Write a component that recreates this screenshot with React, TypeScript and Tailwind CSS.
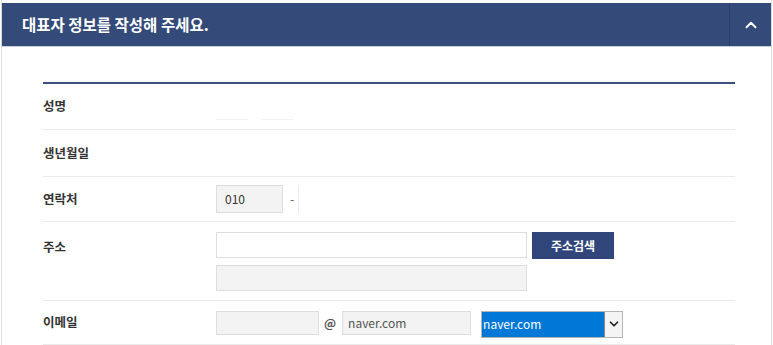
import { ChevronUp, ChevronDown } from 'lucide-react';

const font = { fontFamily: '"Noto Sans CJK KR", "Noto Sans", sans-serif' };

function Label({ children }: { children: React.ReactNode }) {
  return <div className="w-[173px] shrink-0 text-[12.5px] font-bold text-[#333]">{children}</div>;
}

export default function App() {
  return (
    <div className="h-[345px] w-[773px] overflow-hidden bg-white" style={font}>
      <div className="mx-[1px] h-full border-x border-[#dcdcdc] pt-[3px]">
        {/* Header */}
        <div className="flex h-[43px] items-center bg-[#344a79] shadow-[0_1px_0_#c9d0de]">
          <h1 className="flex-1 pl-[20px] text-[15.5px] font-bold text-white">대표자 정보를 작성해 주세요.</h1>
          <div className="flex h-full w-[42px] items-center justify-center border-l border-[#2c3f69]">
            <ChevronUp className="h-[18px] w-[18px] text-white" strokeWidth={2.5} />
          </div>
        </div>

        {/* Form */}
        <div className="pl-[41px] pr-[36px] pt-[36px]">
          <div className="border-t-2 border-[#3d4f80]">
            <div className="flex h-[46px] items-center border-b border-[#ebebeb]">
              <Label>성명</Label>
              <div className="flex gap-[13px] pt-[10px]">
                <div className="h-[16px] w-[32px] border-b border-[#f3f3f3]" />
                <div className="h-[16px] w-[32px] border-b border-[#f3f3f3]" />
              </div>
            </div>
            <div className="flex h-[47px] items-center border-b border-[#ebebeb]">
              <Label>생년월일</Label>
            </div>
            <div className="flex h-[45px] items-center border-b border-[#ebebeb]">
              <Label>연락처</Label>
              <div className="flex h-[28px] w-[67px] items-center border border-[#dedede] bg-[#f3f3f3] pl-[8px] text-[12px] text-[#333]">010</div>
              <span className="ml-[7px] text-[12px] text-[#555]">-</span>
              <div className="ml-[4px] h-[28px] border-l border-[#ececec]" />
            </div>
            <div className="flex h-[79px] items-start border-b border-[#ebebeb] pt-[10px]">
              <div className="w-[173px] shrink-0 pt-[6px] text-[12.5px] font-bold text-[#333]">주소</div>
              <div className="flex flex-col gap-[6px]">
                <div className="flex gap-[5px]">
                  <div className="h-[26px] w-[311px] border border-[#dedede] bg-white" />
                  <button className="h-[27px] w-[82px] bg-[#30467a] text-[12px] font-bold text-white">주소검색</button>
                </div>
                <div className="h-[26px] w-[311px] border border-[#dedede] bg-[#f3f3f3]" />
              </div>
            </div>
            <div className="flex h-[44px] items-center border-b border-[#ebebeb]">
              <Label>이메일</Label>
              <div className="h-[24px] w-[103px] border border-[#dedede] bg-[#f3f3f3]" />
              <span className="ml-[5px] text-[12px] font-bold text-[#555]">@</span>
              <div className="ml-[6px] flex h-[24px] w-[129px] items-center border border-[#dedede] bg-[#f3f3f3] pl-[5px] text-[12px] text-[#555]">naver.com</div>
              <div className="ml-[10px] mt-[3px] flex h-[27px] w-[142px] border border-[#b5b5b5] bg-white">
                <div className="flex flex-1 items-center bg-[#0078d7] pl-[1px] text-[12px] text-white">naver.com</div>
                <div className="flex w-[18px] items-center justify-center border-l border-[#888] bg-[#f4f4f4]">
                  <ChevronDown className="h-3.5 w-3.5 text-[#222]" strokeWidth={3} />
                </div>
              </div>
            </div>
          </div>
        </div>
      </div>
    </div>
  );
}
